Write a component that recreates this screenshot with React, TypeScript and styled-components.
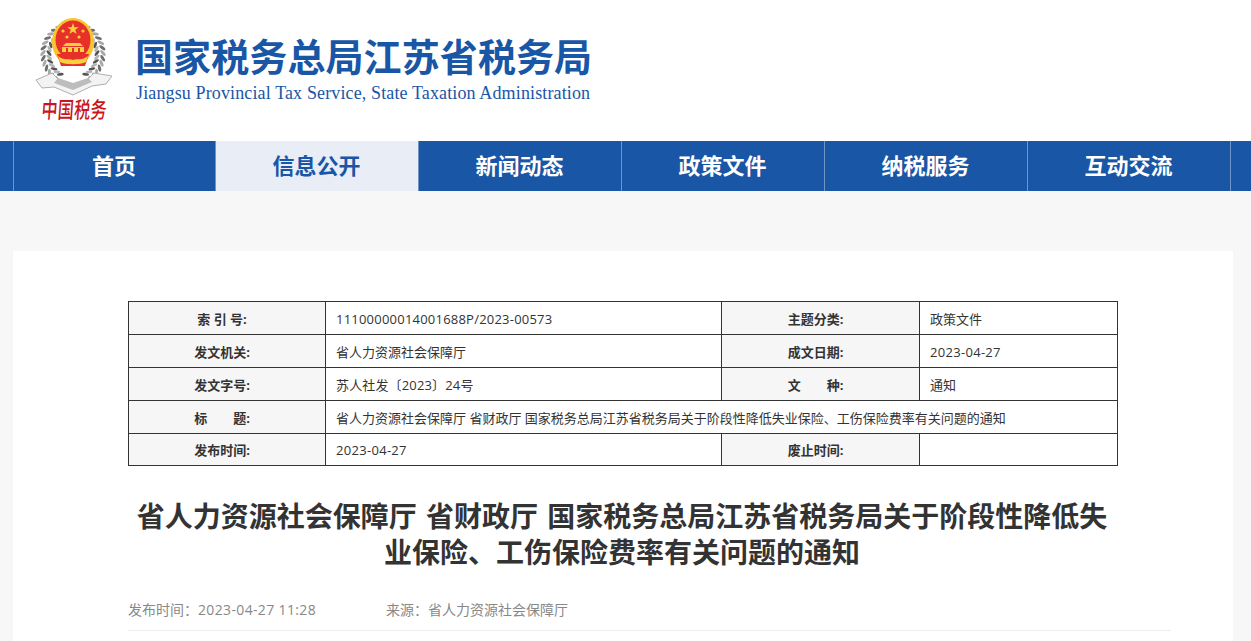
import React from "react";
import styled, { createGlobalStyle } from "styled-components";

const NAV_ITEMS = ["首页", "信息公开", "新闻动态", "政策文件", "纳税服务", "互动交流"];

const FONT = `"Open Sans", "Noto Sans CJK SC", sans-serif`;

const GlobalStyle = createGlobalStyle`
  html, body {
    margin: 0;
    padding: 0;
    overflow: hidden;
    background: #f7f7f7;
    font-family: ${FONT};
  }
`;

const Header = styled.header`
  display: flex;
  align-items: flex-start;
  height: 141px;
  padding-left: 30px;
  background: #fff;
`;

const Logo = styled.svg`
  width: 85px;
  height: 110px;
  margin-top: 15px;
  flex: none;
`;

const Brand = styled.div`
  display: flex;
  flex-direction: column;
  margin-left: 20px;
  padding-top: 32px;
  color: #1a56a6;
`;

const BrandName = styled.div`
  font-family: "Noto Sans CJK SC", sans-serif;
  font-size: 38px;
  font-weight: 700;
  line-height: 46px;
  letter-spacing: 0.1px;
  white-space: nowrap;
`;

const BrandEnglish = styled.div`
  margin-top: 4px;
  margin-left: 1px;
  font-family: "Liberation Serif", serif;
  font-size: 18px;
  line-height: 22px;
  letter-spacing: 0.13px;
  white-space: nowrap;
`;

const Nav = styled.nav`
  display: flex;
  height: 50px;
  padding-left: 13px;
  background: #1a56a6;
`;

const NavItem = styled.a<{ $active?: boolean }>`
  width: 201px;
  padding-right: 1px;
  border-left: 1px solid #6f95c6;
  background: ${(p) => (p.$active ? "#e8edf6" : "transparent")};
  color: ${(p) => (p.$active ? "#1a56a6" : "#fff")};
  font-family: "Noto Sans CJK SC", sans-serif;
  font-size: 22px;
  font-weight: 700;
  line-height: 47px;
  text-align: center;

  &:first-child {
    width: 200px;
  }

  &:last-child {
    border-right: 1px solid #6f95c6;
  }
`;

const Main = styled.main`
  padding: 60px 18px 0 13px;
`;

const Panel = styled.div`
  height: 500px;
  padding: 50px 62px 0 115px;
  background: #fff;
`;

const InfoTable = styled.table`
  width: 989px;
  border-collapse: collapse;
  table-layout: fixed;
  color: #333;
  font-size: 13px;
`;

const LabelCell = styled.th`
  height: 31px;
  padding: 1px 10px 0 0;
  border: 1px solid #333;
  background: #f6f6f6;
  font-weight: 700;
  line-height: 20px;
  text-align: center;
  white-space: pre;

  tr:last-child > & {
    height: 30px;
  }
`;

const ValueCell = styled.td<{ $spacing?: number }>`
  padding: 1px 0 0 10px;
  border: 1px solid #333;
  letter-spacing: ${(p) => p.$spacing ?? 0}px;
  line-height: 20px;
`;

const Title = styled.h1`
  width: 988px;
  margin: 31px 0 0;
  color: #333;
  font-family: "Noto Sans CJK SC", sans-serif;
  font-size: 28px;
  font-weight: 700;
  line-height: 36px;
  text-align: center;
  word-spacing: 3px;
`;

const Meta = styled.div`
  display: flex;
  margin-top: 31px;
  padding-bottom: 10px;
  border-bottom: 1px solid #eee;
  color: #888;
  font-size: 14px;
  line-height: 20px;
`;

const MetaItem = styled.span`
  margin-right: 70px;
`;

const MetaTime = styled.span`
  letter-spacing: 0.35px;
`;

// 麦穗：沿圆弧排列的叶片，右侧由左侧镜像
const WHEAT = Array.from({ length: 13 }, (_, i) => {
  const deg = 118 + i * 10;
  return { i, deg, angle: (deg * Math.PI) / 180 };
});

function WheatSide() {
  return (
    <g>
      {WHEAT.map(({ i, angle, deg }) => {
        const ox = 73 + 30 * Math.cos(angle);
        const oy = 54 - 30 * Math.sin(angle);
        const ix = 73 + 24 * Math.cos(angle);
        const iy = 54 - 24 * Math.sin(angle);
        return (
          <g key={i}>
            <ellipse cx={ox} cy={oy} rx="3.6" ry="1.5" fill={i % 2 ? "#6e6e6e" : "#a8a8a8"} transform={`rotate(${-deg + 130} ${ox} ${oy})`} />
            <ellipse cx={ix} cy={iy} rx="3.4" ry="1.4" fill={i % 2 ? "#b4b4b4" : "#555"} transform={`rotate(${-deg + 50} ${ix} ${iy})`} />
          </g>
        );
      })}
    </g>
  );
}

function Emblem() {
  return (
    <Logo viewBox="30 15 85 110">
      <WheatSide />
      <g transform="translate(146 0) scale(-1 1)">
        <WheatSide />
      </g>
      {/* 绶带 */}
      <path d="M36 80L52 73L58 79L73 84L88 79L94 73L112 76L106 84L92 86L73 95L54 87L42 88Z" fill="#f3f3f3" stroke="#b0b0b0" strokeWidth="1" />
      <path d="M54 83L73 90L92 82L88 78L73 83L58 78Z" fill="#bdbdbd" />
      {/* 国徽 */}
      <ellipse cx="73" cy="42" rx="21" ry="24" fill="#f7c52d" />
      <ellipse cx="73" cy="40" rx="17.5" ry="19.5" fill="#e8302a" />
      <path d="M57 54H89L85 66H61Z" fill="#e8302a" />
      <path d="M73 23l1.4 4.2h4.4l-3.6 2.6 1.4 4.2-3.6-2.6-3.6 2.6 1.4-4.2-3.6-2.6h4.4Z" fill="#f7d23c" />
      <g fill="#f7d23c">
        <circle cx="63" cy="31" r="1.6" />
        <circle cx="83" cy="31" r="1.6" />
        <circle cx="67" cy="37" r="1.6" />
        <circle cx="79" cy="37" r="1.6" />
        <path d="M66 43H80L83 46H63Z" />
        <rect x="62" y="47" width="22" height="5" />
        <path d="M58 56C64 61 68 58 73 60C78 58 82 61 88 56L86 62C80 65 66 65 60 62Z" />
      </g>
      <g fill="#e8302a">
        <rect x="66" y="48" width="2" height="4" />
        <rect x="72" y="48" width="2" height="4" />
        <rect x="78" y="48" width="2" height="4" />
      </g>
      <text
        transform="translate(41 118) scale(1 1.4) skewX(-6)"
        fontFamily='"Noto Sans CJK SC", sans-serif'
        fontSize="16"
        fontWeight="500"
        fill="#c8161d"
        textLength="65"
      >
        中国税务
      </text>
    </Logo>
  );
}

const App: React.FC = () => {
  return (
    <>
      <GlobalStyle />
      <Header>
        <Emblem />
        <Brand>
          <BrandName>国家税务总局江苏省税务局</BrandName>
          <BrandEnglish>Jiangsu Provincial Tax Service, State Taxation Administration</BrandEnglish>
        </Brand>
      </Header>
      <Nav>
        {NAV_ITEMS.map((item) => (
          <NavItem key={item} $active={item === "信息公开"}>
            {item}
          </NavItem>
        ))}
      </Nav>
      <Main>
        <Panel>
          <InfoTable>
            <colgroup>
              <col style={{ width: 197 }} />
              <col style={{ width: 396 }} />
              <col style={{ width: 198 }} />
              <col style={{ width: 198 }} />
            </colgroup>
            <tbody>
              <tr>
                <LabelCell>索 引 号:</LabelCell>
                <ValueCell $spacing={0.22}>11100000014001688P/2023-00573</ValueCell>
                <LabelCell>主题分类:</LabelCell>
                <ValueCell>政策文件</ValueCell>
              </tr>
              <tr>
                <LabelCell>发文机关:</LabelCell>
                <ValueCell>省人力资源社会保障厅</ValueCell>
                <LabelCell>成文日期:</LabelCell>
                <ValueCell $spacing={0.3}>2023-04-27</ValueCell>
              </tr>
              <tr>
                <LabelCell>发文字号:</LabelCell>
                <ValueCell $spacing={0.15}>苏人社发〔2023〕24号</ValueCell>
                <LabelCell>文　　种:</LabelCell>
                <ValueCell>通知</ValueCell>
              </tr>
              <tr>
                <LabelCell>标　　题:</LabelCell>
                <ValueCell colSpan={3}>省人力资源社会保障厅 省财政厅 国家税务总局江苏省税务局关于阶段性降低失业保险、工伤保险费率有关问题的通知</ValueCell>
              </tr>
              <tr>
                <LabelCell>发布时间:</LabelCell>
                <ValueCell $spacing={0.3}>2023-04-27</ValueCell>
                <LabelCell>废止时间:</LabelCell>
                <ValueCell />
              </tr>
            </tbody>
          </InfoTable>
          <Title>省人力资源社会保障厅 省财政厅 国家税务总局江苏省税务局关于阶段性降低失业保险、工伤保险费率有关问题的通知</Title>
          <Meta>
            <MetaItem>
              发布时间：<MetaTime>2023-04-27 11:28</MetaTime>
            </MetaItem>
            <MetaItem>来源：省人力资源社会保障厅</MetaItem>
          </Meta>
        </Panel>
      </Main>
    </>
  );
};

export default App;
